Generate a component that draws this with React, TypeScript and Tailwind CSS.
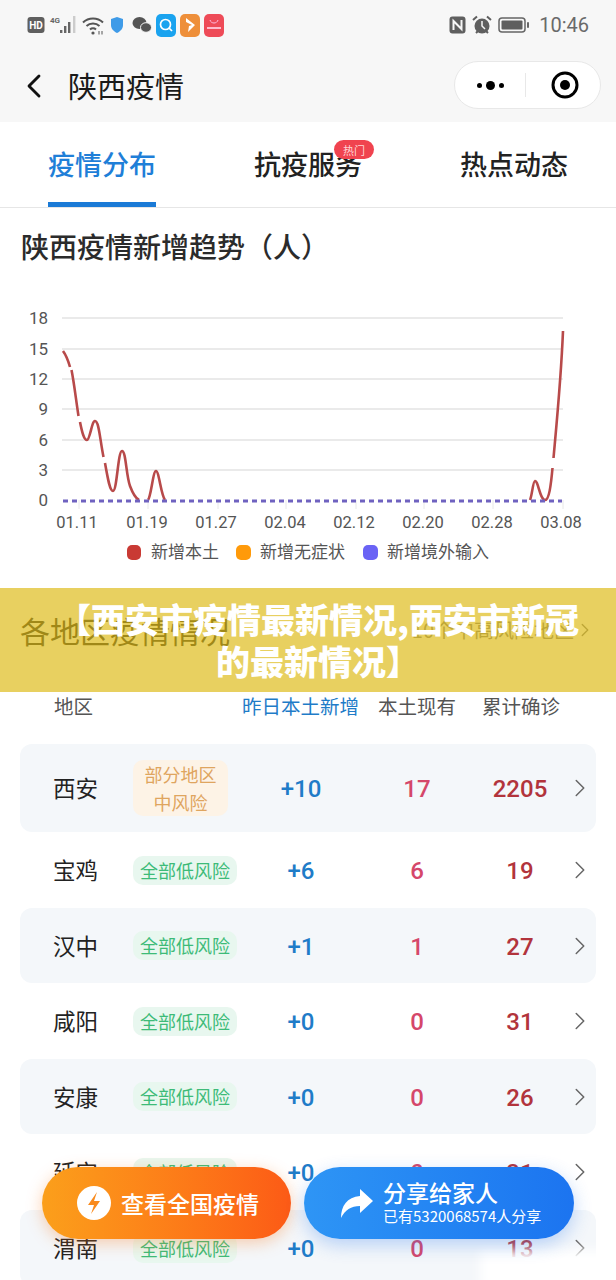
import React from "react";
import { ChevronLeft, ChevronRight } from "lucide-react";

const cjk = { fontFamily: '"Noto Sans CJK SC", "Noto Sans", sans-serif' };

function StatusLeft() {
  return (
    <div className="flex items-center gap-[4px]">
      <svg width="18" height="18" viewBox="0 0 18 18"><rect x="0.5" y="1" width="17" height="16" rx="3" fill="#5f5f5f" /><text x="9" y="13" textAnchor="middle" fontSize="10" fontWeight="700" fill="#fff" fontFamily="Roboto, sans-serif">HD</text></svg>
      <svg width="30" height="22" viewBox="0 0 30 22">
        <text x="1" y="9" fontSize="8" fontWeight="700" fill="#666" fontFamily="Roboto, sans-serif">4G</text>
        <rect x="11" y="16" width="2.4" height="3" fill="#666" />
        <rect x="15" y="12" width="2.4" height="7" fill="#666" />
        <rect x="19" y="8" width="2.4" height="11" fill="#666" />
        <rect x="24" y="2" width="2.4" height="17" fill="#ccc" />
      </svg>
      <svg width="22" height="22" viewBox="0 0 22 22" fill="none" stroke="#555" strokeWidth="2" className="-ml-[1px]">
        <path d="M1 8.5c5.5-5.4 14.5-5.4 20 0" />
        <path d="M4.5 12c3.6-3.4 9.4-3.4 13 0" />
        <path d="M8 15.5c1.7-1.6 4.3-1.6 6 0" />
        <circle cx="11" cy="19" r="1.6" fill="#555" stroke="none" />
        <path d="M17 17v3.5M20 17v3.5" strokeWidth="1" />
      </svg>
      <svg width="14" height="18" viewBox="0 0 14 18" className="ml-[2px]"><path d="M7 1l6 2v6c0 4-3 6.5-6 8-3-1.500-6-4-6-8V3z" fill="#3f9be8" /></svg>
      <svg width="20" height="18" viewBox="0 0 20 18" className="ml-[4px]" fill="#555"><ellipse cx="7.500" cy="7" rx="7" ry="6" /><ellipse cx="14" cy="11.500" rx="5.500" ry="4.800" stroke="#f7f7f7" strokeWidth="1" /></svg>
      <svg width="20" height="23" viewBox="0 0 20 23"><rect width="20" height="23" rx="5" fill="#1aa3ef" /><circle cx="9.500" cy="10.500" r="5" fill="none" stroke="#fff" strokeWidth="1.700" /><path d="M13 14l3 3" stroke="#fff" strokeWidth="1.700" /></svg>
      <svg width="20" height="23" viewBox="0 0 20 23"><rect width="20" height="23" rx="5" fill="#ee8f3a" /><path d="M6 4l9 7-7 7 1-6 3-1-6-3z" fill="#fff" /></svg>
      <svg width="20" height="23" viewBox="0 0 20 23"><rect width="20" height="23" rx="5" fill="#ee4b58" /><path d="M6 6c1 4 7 4 8 0" fill="none" stroke="#fbd" strokeWidth="1" /><rect x="3" y="13" width="14" height="2" fill="#fbc" /></svg>
    </div>
  );
}

function StatusRight() {
  return (
    <div className="flex items-center">
      <svg width="17" height="18" viewBox="0 0 17 18"><rect x="0.500" y="0.500" width="16" height="17" rx="3" fill="#5f5f5f" /><path d="M4.500 14V5l8 8V4" fill="none" stroke="#f7f7f7" strokeWidth="2" /></svg>
      <svg width="20" height="20" viewBox="0 0 20 20" className="ml-[6px]"><circle cx="10" cy="11" r="7.500" fill="#5f5f5f" /><path d="M10 6v5l3 3" stroke="#f7f7f7" strokeWidth="1.500" fill="none" /><path d="M1 5l4-3.500M19 5l-4-3.500M4 18l2-2M16 18l-2-2" stroke="#5f5f5f" strokeWidth="2" /></svg>
      <svg width="32" height="18" viewBox="0 0 32 18" className="ml-[6px]"><rect x="1" y="2" width="26" height="14" rx="3" fill="none" stroke="#666" strokeWidth="1.500" /><rect x="3.500" y="4.500" width="21" height="9" rx="1" fill="#5f5f5f" /><rect x="29" y="6" width="2" height="6" rx="1" fill="#666" /></svg>
      <span className="ml-[9px] text-[20px] text-[#6a6a6a]" style={{ fontFamily: "Roboto, sans-serif" }}>10:46</span>
    </div>
  );
}

function Chart() {
  const grid = [318, 349, 379, 409, 440, 470];
  const ylab = [["18", 318], ["15", 349], ["12", 379], ["9", 409], ["6", 440], ["3", 470], ["0", 500]] as const;
  const xlab = [["01.11", 77], ["01.19", 147], ["01.27", 216], ["02.04", 285], ["02.12", 354], ["02.20", 423], ["02.28", 492], ["03.08", 561]] as const;
  const ticks = [79, 148, 218, 286, 356, 424, 493, 563];
  const toY = (y: number) => y - 290;
  const red = [
    "M63 351C66 355 68 360 70 367",
    "M71.500 370C74 382 76 400 78.500 416",
    "M80 422C82 432 84 440 87 440C90 440 92 420 95 421C99 421 100 440 103.500 457",
    "M105 463C108 480 110 491 113 491C117 491 118 451 122 451C126 451 126 475 130 486C133 494 135 498 139 500",
    "M148 500C151 497 153 471 156 471C159 471 161 495 165 500",
    "M530 500C532 496 533 481 535 481C538 480 540 500 545 500C549 500 551 485 552.500 468",
    "M553.500 458C556 430 561 380 563 331",
  ];
  return (
    <svg width="616" height="280" viewBox="0 0 616 280" className="block" style={cjk}>
      {grid.map((y) => <line key={y} x1="62" x2="563" y1={toY(y)} y2={toY(y)} stroke="#e3e3e3" strokeWidth="1.500" />)}
      {ticks.map((x) => <line key={x} x1={x} x2={x} y1={210} y2={219} stroke="#e8e8e8" strokeWidth="1" />)}
      {ylab.map(([t, y]) => <text key={t} x="48" y={toY(y) + 6} textAnchor="end" fontSize="17" fill="#555" style={{ fontFamily: "Roboto, sans-serif" }}>{t}</text>)}
      {xlab.map(([t, x]) => <text key={t} x={x} y="238" textAnchor="middle" fontSize="16.500" fill="#555" style={{ fontFamily: "Roboto, sans-serif" }}>{t}</text>)}
      <g transform="translate(0,-290)">
        {red.map((d) => <path key={d} d={d} fill="none" stroke="#b84a4a" strokeWidth="2.600" />)}
      </g>
      <line x1="63" x2="562" y1="211" y2="211" stroke="#6f62c0" strokeWidth="3" strokeDasharray="5 4" />
      <rect x="127" y="255" width="14" height="15" rx="5" fill="#c93a34" />
      <text x="151" y="268" fontSize="17" fill="#555">新增本土</text>
      <rect x="236" y="255" width="15" height="15" rx="5" fill="#ff9a0a" />
      <text x="260" y="268" fontSize="17" fill="#555">新增无症状</text>
      <rect x="363" y="255" width="15" height="15" rx="5" fill="#6a63f5" />
      <text x="387" y="268" fontSize="17" fill="#555">新增境外输入</text>
    </svg>
  );
}

type RowData = { name: string; add: string; now: string; total: string; tall?: boolean; card?: boolean; h: string };
const rows: RowData[] = [
  { name: "西安", add: "+10", now: "17", total: "2205", tall: true, card: true, h: "h-[88px]" },
  { name: "宝鸡", add: "+6", now: "6", total: "19", h: "h-[76px]" },
  { name: "汉中", add: "+1", now: "1", total: "27", card: true, h: "h-[75px]" },
  { name: "咸阳", add: "+0", now: "0", total: "31", h: "h-[76px]" },
  { name: "安康", add: "+0", now: "0", total: "26", card: true, h: "h-[75px]" },
  { name: "延安", add: "+0", now: "0", total: "31", h: "h-[76px]" },
  { name: "渭南", add: "+0", now: "0", total: "13", card: true, h: "h-[76px]" },
];

const numFont = { fontFamily: "Roboto, sans-serif" };

function Row({ r }: { r: RowData }) {
  return (
    <div className={`mx-[20px] flex items-center rounded-[12px] ${r.h} ${r.card ? "bg-[#f4f7fa]" : "bg-white"}`}>
      <div className="w-[113px] pl-[33px] text-[22.500px] text-[#222]">{r.name}</div>
      {r.tall ? (
        <div className="flex h-[56px] w-[95px] flex-col items-center justify-center rounded-[10px] bg-[#fdf3e6] text-[18px] leading-[28px] text-[#dfa55f]">
          <span>部分地区</span>
          <span>中风险</span>
        </div>
      ) : (
        <div className="flex h-[29px] w-[104px] items-center justify-center rounded-[10px] bg-[#e8f7ef] text-[18px] text-[#3dbb78]">全部低风险</div>
      )}
      <div className={`w-[98px] pt-[2px] text-center text-[24px] font-medium text-[#1f7cc8] ${r.tall ? "ml-[24px]" : "ml-[15px]"}`} style={numFont}>{r.add}</div>
      <div className="ml-[19px] w-[96px] pt-[2px] text-center text-[24px] font-medium text-[#d5476a]" style={numFont}>{r.now}</div>
      <div className="ml-[3px] w-[104px] pt-[2px] text-center text-[24px] font-medium text-[#b2343c]" style={numFont}>{r.total}</div>
      <ChevronRight size={30} strokeWidth={1.200} className="ml-[-7px] text-[#666]" />
    </div>
  );
}

export default function App() {
  return (
    <div className="relative h-[1280px] w-[616px] overflow-hidden bg-white" style={cjk}>
      <div className="bg-[#f7f7f7]">
        <div className="flex h-[50px] items-center justify-between pl-[27px] pr-[27px]">
          <StatusLeft />
          <StatusRight />
        </div>
        <div className="flex h-[72px] items-center justify-between pl-[14px] pr-[15px]">
          <div className="flex items-center">
            <ChevronLeft size={40} strokeWidth={1.700} className="text-[#111]" />
            <span className="ml-[14px] text-[29px] text-[#1a1a1a]">陕西疫情</span>
          </div>
          <div className="mt-[-2px] flex h-[48px] w-[147px] items-center rounded-full border border-[#e8e8e8] bg-white">
            <div className="flex flex-1 items-center justify-center gap-[4px]">
              <span className="h-[5px] w-[5px] rounded-full bg-black" />
              <span className="h-[9px] w-[9px] rounded-full bg-black" />
              <span className="h-[5px] w-[5px] rounded-full bg-black" />
            </div>
            <div className="h-[24px] w-px bg-[#e8e8e8]" />
            <div className="flex flex-1 items-center justify-center pl-[4px]">
              <svg width="30" height="30" viewBox="0 0 30 30"><circle cx="15" cy="15" r="12" fill="none" stroke="#000" strokeWidth="3" /><circle cx="15" cy="15" r="5" fill="#000" /></svg>
            </div>
          </div>
        </div>
      </div>

      <div className="flex h-[86px] items-start justify-between border-b border-[#e6e6e6] pl-[48px] pr-[48px] pt-[22px] text-[27px] font-medium leading-[40px]">
        <div className="relative h-[63px] border-b-[5px] border-[#1a7ad6] text-[#1f7fd8]">疫情分布</div>
        <div className="relative text-[#222]">
          抗疫服务
          <span className="absolute left-[80px] top-[-4px] flex h-[19px] w-[40px] items-center justify-center rounded-full bg-[#f0434f] text-[11px] font-normal text-[#ffd6d6]">热门</span>
        </div>
        <div className="text-[#222]">热点动态</div>
      </div>

      <div className="pl-[21px] pt-[18px] text-[28px] font-medium leading-[40px] text-[#2b2b2b]">陕西疫情新增趋势（人）</div>
      <div className="mt-[24px]"><Chart /></div>

      <div className="flex h-[115px] items-start justify-between pl-[20px] pr-[20px] pt-[39px]">
        <span className="text-[30px] leading-[42px] text-[#333]">各地区疫情情况</span>
        <span className="flex items-center pt-[6px] pl-[10px] text-[20px] text-[#888]">10个中高风险地区<ChevronRight size={22} strokeWidth={1.500} /></span>
      </div>
      <div className="flex h-[42px] items-center text-[19.500px] text-[#555]">
        <span className="ml-[54px]">地区</span>
        <span className="ml-[149px] text-[#1f7cc8]">昨日本土新增</span>
        <span className="ml-[19px]">本土现有</span>
        <span className="ml-[26px]">累计确诊</span>
      </div>
      <div className="mt-[17px]">
        {rows.map((r) => <Row key={r.name} r={r} />)}
      </div>

      <div className="absolute left-0 top-[588px] flex h-[104px] w-full flex-col items-center justify-center bg-[#dcb70a]/65 pl-[20px] text-center text-[34px] font-black leading-[42px] text-white">
        <span>【西安市疫情最新情况,西安市新冠</span>
        <span>的最新情况】</span>
      </div>

      <div className="absolute left-[480px] top-[1250px] h-[40px] w-[136px] bg-white blur-[6px]" />

      <div className="absolute left-[42px] top-[1167px] flex h-[72px] w-[249px] items-center rounded-full bg-gradient-to-r from-[#fb9f1b] to-[#fc5a16] pl-[35px] shadow-[0_4px_16px_rgba(250,120,30,0.35)]">
        <svg width="34" height="34" viewBox="0 0 34 34"><circle cx="17" cy="17" r="17" fill="#fff" /><path d="M20 6l-9 13h6l-3 9 9-13h-6z" fill="#f98a1c" /></svg>
        <span className="ml-[10px] text-[23px] font-medium text-white">查看全国疫情</span>
      </div>
      <div className="absolute left-[304px] top-[1167px] flex h-[72px] w-[270px] items-center rounded-full bg-gradient-to-r from-[#2e95f5] to-[#1c74f0] pl-[36px] shadow-[0_6px_18px_rgba(40,120,240,0.3)]">
        <svg width="34" height="32" viewBox="0 0 34 32"><path d="M20 2l13 12-13 12v-7C11 19 5 23 1 31c0-12 6-21 19-22z" fill="#fff" /></svg>
        <div className="ml-[9px] mt-[-4px] flex flex-col text-white">
          <span className="text-[23px] font-medium leading-[30px]">分享给家人</span>
          <span className="text-[15px] leading-[18px]">已有5320068574人分享</span>
        </div>
      </div>
    </div>
  );
}
